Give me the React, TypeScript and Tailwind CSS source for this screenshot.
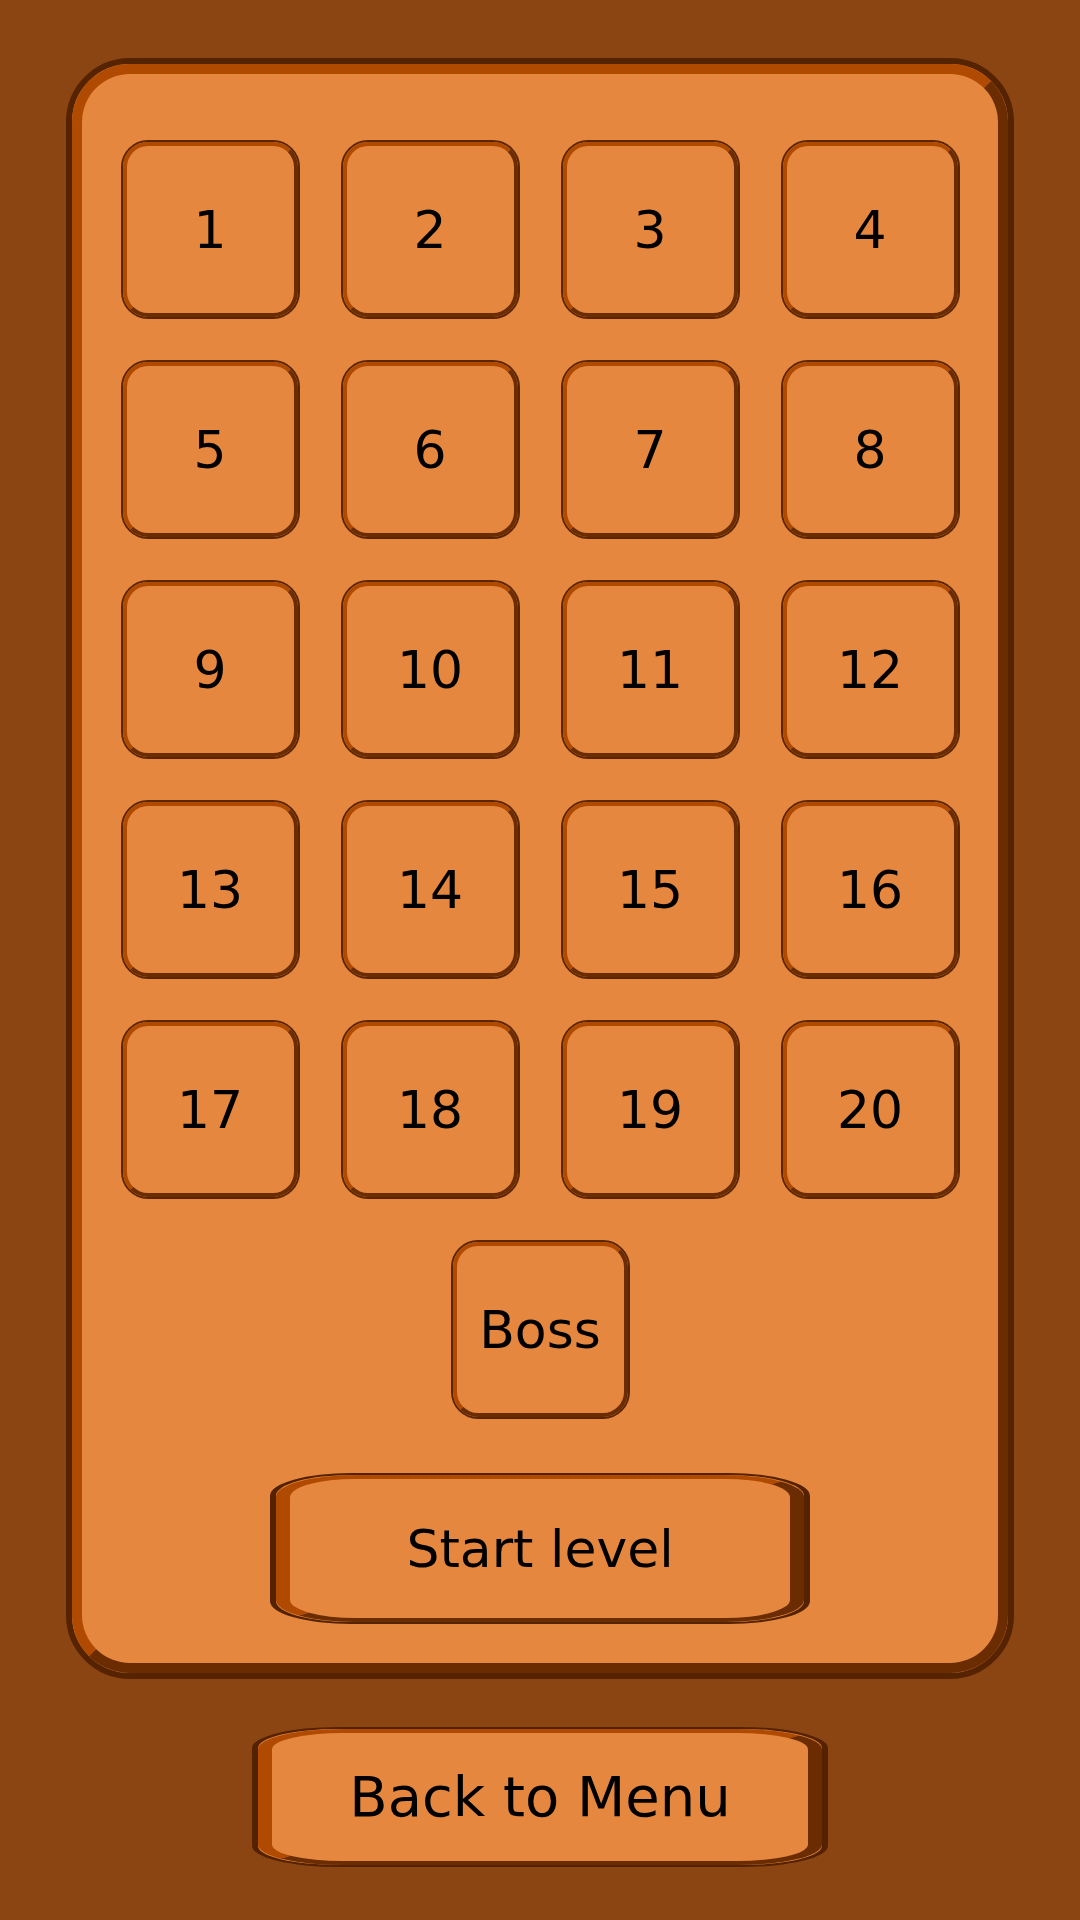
import React from "react";

const levels = Array.from({ length: 20 }, (_, i) => String(i + 1));

const LevelButton = ({ label }: { label: string }) => {
  return (
    <div className="w-[179px] h-[179px] rounded-[27px] border-2 border-[#5a2500] bg-[#e5873f]">
      <div className="w-full h-full rounded-[25px] border-4 border-t-[#b04a00] border-l-[#b04a00] border-b-[#6a2c00] border-r-[#6a2c00] flex items-center justify-center text-[52px] text-black">
        {label}
      </div>
    </div>
  );
};

const WideButton = ({ label, w, h, size }: { label: string; w: string; h: string; size: string }) => {
  return (
    <div className={`${w} ${h} rounded-[15%] border-x-[6px] border-y-2 border-[#552200] bg-[#e5873f]`}>
      <div
        className={`w-full h-full rounded-[15%] border-x-[14px] border-y-4 border-t-[#b04a00] border-l-[#b04a00] border-b-[#6a2c00] border-r-[#6a2c00] flex items-center justify-center ${size} text-black`}
      >
        {label}
      </div>
    </div>
  );
};

const App = () => {
  return (
    <div
      className="w-[1080px] h-[1920px] bg-[#8b4513] flex flex-col items-center pt-[58px]"
      style={{ fontFamily: '"DejaVu Sans", Verdana, sans-serif' }}
    >
      <div className="w-[948px] h-[1621px] rounded-[64px] border-[6px] border-[#562300] bg-[#e5873f]">
        <div className="w-full h-full rounded-[58px] border-[10px] border-t-[#b04a00] border-l-[#b04a00] border-b-[#6a2c00] border-r-[#6a2c00] flex flex-col items-center pt-[66px]">
          <div className="grid grid-cols-[repeat(4,179px)] gap-[41px]">
            {levels.map((l) => (
              <LevelButton key={l} label={l} />
            ))}
          </div>
          <div className="mt-[41px]">
            <LevelButton label="Boss" />
          </div>
          <div className="mt-[54px]">
            <WideButton label="Start level" w="w-[540px]" h="h-[151px]" size="text-[52px]" />
          </div>
        </div>
      </div>
      <div className="mt-[48px]">
        <WideButton label="Back to Menu" w="w-[576px]" h="h-[140px]" size="text-[56px]" />
      </div>
    </div>
  );
};

export default App;
